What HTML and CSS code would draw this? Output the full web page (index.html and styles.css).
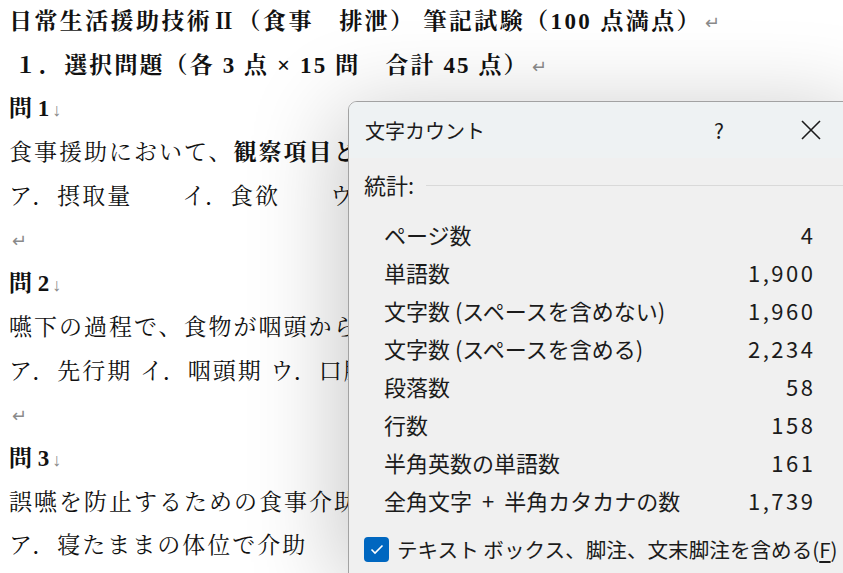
FILE: index.html
```html
<!DOCTYPE html>
<html lang="ja">
<head>
  <meta charset="UTF-8" />
  <title>文字カウント</title>
  <link rel="stylesheet" href="styles.css">
</head>
<body>

  <div class="doc">
    <p class="line title">日常生活援助技術Ⅱ（食事　排泄） 筆記試験（100 点満点）<span class="mark">↵</span></p>
    <p class="line head">１．選択問題（各 3 点 × 15 問　合計 45 点）<span class="mark">↵</span></p>
    <p class="line q">問 1<span class="mark">↓</span></p>
    <p class="line">食事援助において、<b>観察項目として適切なもの</b></p>
    <p class="line">ア．摂取量　　イ．食欲　　ウ．嗜好</p>
    <p class="line"><span class="mark">↵</span></p>
    <p class="line q">問 2<span class="mark">↓</span></p>
    <p class="line">嚥下の過程で、食物が咽頭から食道へ</p>
    <p class="line">ア．先行期 イ．咽頭期 ウ．口腔期</p>
    <p class="line"><span class="mark">↵</span></p>
    <p class="line q">問 3<span class="mark">↓</span></p>
    <p class="line">誤嚥を防止するための食事介助として</p>
    <p class="line">ア．寝たままの体位で介助</p>
  </div>

  <div class="dialog">
    <div class="dialog-head">
      <span class="dialog-title">文字カウント</span>
      <span class="help">?</span>
      <svg class="close" width="22" height="22" viewBox="0 0 22 22">
        <path d="M2 2 L20 20 M20 2 L2 20" stroke="#1b1b1b" stroke-width="1.6" fill="none"/>
      </svg>
    </div>
    <div class="dialog-body">
      <div class="group">
        <span>統計:</span>
        <span class="rule"></span>
      </div>
      <div class="stats">
        <div class="row"><span>ページ数</span><span class="num">4</span></div>
        <div class="row"><span>単語数</span><span class="num">1,900</span></div>
        <div class="row"><span>文字数 (スペースを含めない)</span><span class="num">1,960</span></div>
        <div class="row"><span>文字数 (スペースを含める)</span><span class="num">2,234</span></div>
        <div class="row"><span>段落数</span><span class="num">58</span></div>
        <div class="row"><span>行数</span><span class="num">158</span></div>
        <div class="row"><span>半角英数の単語数</span><span class="num">161</span></div>
        <div class="row"><span>全角文字<span class="plus">+</span>半角カタカナの数</span><span class="num">1,739</span></div>
      </div>
      <label class="check">
        <span class="box">
          <svg width="14" height="11" viewBox="0 0 14 11"><path d="M1.5 5.5 L5 9 L12.5 1.5" stroke="#fff" stroke-width="1.6" fill="none"/></svg>
        </span>
        <span>テキスト ボックス、脚注、文末脚注を含める(<u>F</u>)</span>
      </label>
    </div>
  </div>

</body>
</html>
```

FILE: styles.css
```css
html, body { margin: 0; padding: 0; }
body { width: 843px; height: 573px; overflow: hidden; position: relative; background: #fff; color: #111; }

.doc { padding-left: 9px; font-family: "Liberation Serif", "Noto Serif CJK JP", "Noto Sans CJK JP", serif; font-size: 23px; }
.line { margin: 0; height: 43.7px; line-height: 43.7px; white-space: nowrap; letter-spacing: 2px; }
.title { font-weight: bold; letter-spacing: 2.4px; }
.head { font-weight: bold; letter-spacing: 2.1px; padding-left: 5px; }
.q { font-weight: bold; letter-spacing: 0; }
.line b { font-weight: bold; }
.mark { color: #8a8a8a; font-weight: normal; font-size: 18px; margin-left: 3px; letter-spacing: 0; }

.dialog { position: absolute; left: 348px; top: 101px; width: 520px; height: 472px; border: 1px solid #a2a2a2; border-radius: 9px 0 0 0; background: #f0f0f0; box-shadow: -10px 10px 90px rgba(0, 0, 0, 0.22); font-family: "Noto Sans CJK JP", sans-serif; color: #1b1b1b; overflow: hidden; }
.dialog-head { height: 56px; background: #eef2f3; display: flex; align-items: center; padding-left: 16px; }
.dialog-title { font-size: 20px; flex: 1; }
.help { font-size: 21px; width: 22px; text-align: center; margin-right: 70px; }
.close { margin-right: 47px; }

.dialog-body { padding: 12px 0 0 15px; font-size: 22px; }
.group { display: flex; align-items: center; height: 28px; line-height: 28px; }
.rule { flex: 1; height: 1px; background: #d9d9d9; margin: 3px 0 0 12px; }
.stats { margin: 17px 0 0 20px; width: 429px; }
.row { display: flex; justify-content: space-between; height: 38px; line-height: 38px; }
.num { letter-spacing: 2.5px; margin-right: -2.5px; }
.plus { margin: 0 10px; }

.check { display: flex; align-items: center; gap: 8px; margin-top: 12px; height: 36px; font-size: 20.6px; }
.box { width: 25px; height: 25px; border-radius: 4px; background: #0067c0; display: flex; align-items: center; justify-content: center; }
.check u { text-underline-offset: 3px; }
```
